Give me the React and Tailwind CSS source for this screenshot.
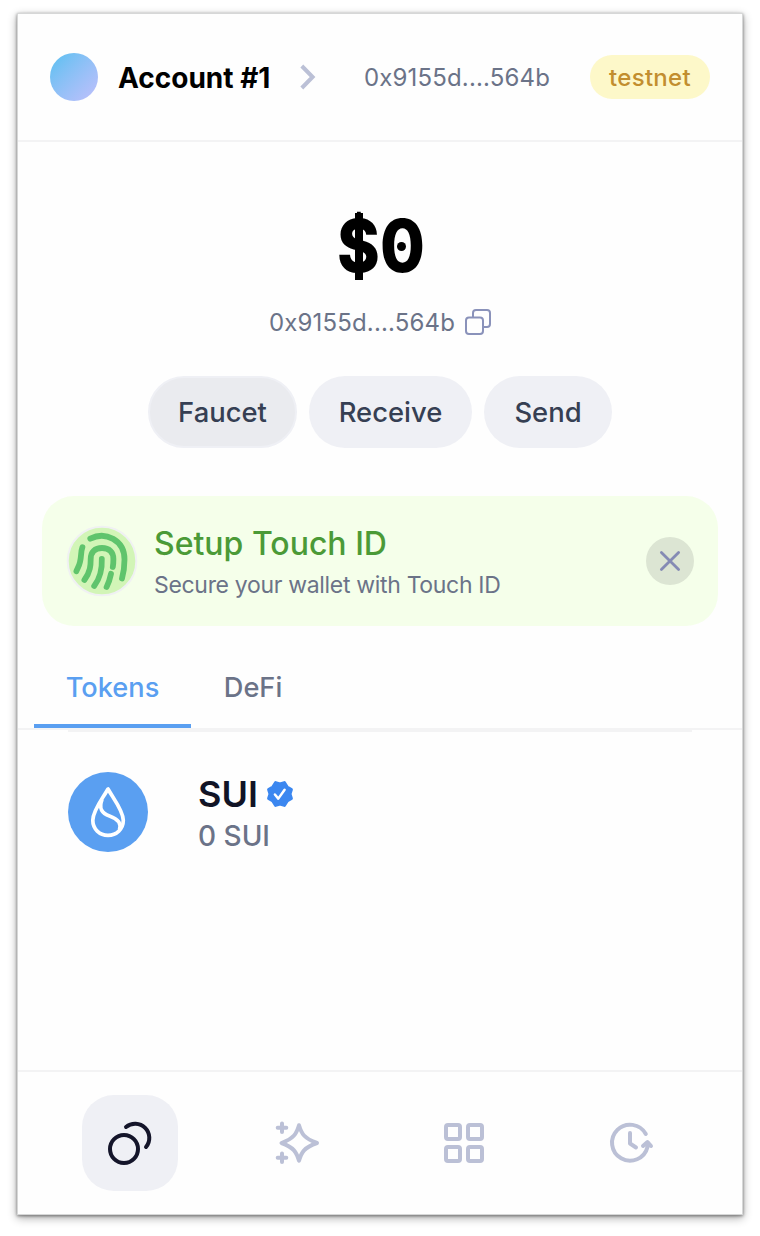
const ADDRESS = '0x9155d....564b';

function CopyIcon() {
  return (
    <svg className="mb-0.5 ml-[10px] size-[26px]" viewBox="0 0 26 26" fill="none" stroke="#8a92ba" strokeWidth="2" strokeLinejoin="round">
      <rect x="1" y="8.5" width="17" height="16.5" rx="3" />
      <path d="M8 8.5V4a3 3 0 0 1 3-3h11a3 3 0 0 1 3 3v11a3 3 0 0 1-3 3h-4" />
    </svg>
  );
}

function FingerprintIcon() {
  return (
    <svg className="size-[72px] shrink-0" viewBox="0 0 72 72" fill="none">
      <circle cx="36" cy="36" r="34.3" fill="#d2f5b7" stroke="#f0f1f3" strokeWidth="2" />
      <g stroke="#5fc46c" strokeWidth="5.8" strokeLinecap="round">
        <path d="M24.3 13.7C39.5 6 58.5 15 58.5 34.5C58.5 42 57.5 48 56 53.5" />
        <path d="M16.4 22.3C14.6 27 15.6 31 14 37C13.3 40.5 11.7 43 10.4 46.2" />
        <path d="M18.4 55C24.5 46.5 24.7 40 24.7 34C24.7 27 29 23 36 23C43 23 47.4 27 47.4 34C47.4 37.5 47.3 39.5 46.8 42" />
        <path d="M35.8 34C36.3 45 33.5 54 28.2 61" />
        <path d="M45 48.8C44 53.5 42.7 58 40.6 62" />
      </g>
    </svg>
  );
}

function SuiLogo() {
  return (
    <svg className="size-20 shrink-0" viewBox="0 0 80 80" fill="none">
      <circle cx="40" cy="40" r="40" fill="#5a9ff1" />
      <g stroke="#fff" strokeWidth="3.7" strokeLinejoin="round">
        <path d="M40 17C35 26 24.8 38.5 24.8 48.3C24.8 57 31.5 63.3 40 63.3C48.5 63.3 55.3 57 55.3 48.3C55.3 38.5 45 26 40 17Z" />
        <path d="M34 27.5C30.5 36.5 34 41.5 41.5 44C50 47 53.5 51.5 51.5 57.5" />
      </g>
    </svg>
  );
}

function VerifiedIcon() {
  return (
    <svg className="ml-[8px] size-7" viewBox="0 0 28 28">
      <path
        fill="#3b87f0" stroke="#3b87f0" strokeWidth="3" strokeLinejoin="round"
        d="M14 4L18.4 2.6L21.1 6.9L25.4 9.6L24 14L25.4 18.4L21.1 21.1L18.4 25.4L14 24L9.6 25.4L6.9 21.1L2.6 18.4L4 14L2.6 9.6L6.9 6.9L9.6 2.6Z"
      />
      <path d="M8.9 14.5L12.3 18.6L18.6 9.7" fill="none" stroke="#fff" strokeWidth="2.5" strokeLinecap="round" strokeLinejoin="round" />
    </svg>
  );
}

function NavButton({ active, children }) {
  return (
    <button className={active ? 'flex size-24 items-center justify-center rounded-[32px] bg-[#eff0f5] text-[#14152a]' : 'flex size-24 items-center justify-center text-[#bbc0d6]'}>
      <svg className="size-12" viewBox="0 0 48 48" fill="none" stroke="currentColor" strokeWidth="4" strokeLinecap="round" strokeLinejoin="round">
        {children}
      </svg>
    </button>
  );
}

export default function App() {
  return (
    <div className="flex h-[1236px] w-[760px] bg-white pt-[13px] pl-[17px] font-['Inter','Liberation_Sans',sans-serif]">
      <main className="flex h-[1202px] w-[726px] flex-col border border-[#d6d7d7] bg-[#fefefe] shadow-[0_3px_9px_rgba(0,0,0,0.32),0_1px_3px_rgba(0,0,0,0.45)]">
        <header className="flex h-32 shrink-0 items-center border-b-2 border-[#f3f3f4] pr-8 pl-8">
          <div className="size-12 shrink-0 rounded-full bg-linear-to-br from-[#54c0f1] to-[#bfbffc]" />
          <span className="ml-[20px] w-[153px] pt-0.5 text-[28px] font-bold whitespace-nowrap text-black">Account #1</span>
          <svg className="ml-[29px] h-[26px] w-4" viewBox="0 0 16 26" fill="none" stroke="#bbc0d6" strokeWidth="4">
            <path d="M1.8 2L12.6 13L1.8 24" />
          </svg>
          <span className="ml-[48px] w-[186px] pt-0.5 text-[24px] tracking-[0.15px] whitespace-nowrap text-[#6b7388]">{ADDRESS}</span>
          <span className="ml-auto flex h-11 w-[120px] items-center justify-center rounded-full bg-[#fdf8c9] pt-0.5 text-[24px] font-medium tracking-[0.3px] text-[#c28e2f]">testnet</span>
        </header>

        <section className="flex flex-col items-center">
          <h1 className="relative mt-[61px] h-[86px] w-[94px] pl-1 text-black">
            <span className="block origin-top-left scale-x-[0.89] text-[73px] leading-[86px] font-extrabold">$0</span>
            <span className="absolute top-[10px] left-[22px] h-[67px] w-2 bg-black" />
            <span className="absolute top-[39px] left-[64px] size-[9px] rounded-full bg-black" />
          </h1>
          <div className="mt-[16px] flex h-9 items-center text-[24px] text-[#6b7388]">
            <span className="w-[186px] tracking-[0.15px] whitespace-nowrap">{ADDRESS}</span>
            <CopyIcon />
          </div>
          <div className="mt-[35px] flex gap-3 text-[27.4px] font-medium text-[#363f53]">
            <button className="h-[72px] w-[149px] rounded-full border-2 border-[#eff0f5] bg-[#eaebef] pt-0.5">Faucet</button>
            <button className="h-[72px] w-[163px] rounded-full bg-[#eff0f5] pt-0.5">Receive</button>
            <button className="h-[72px] w-[128px] rounded-full bg-[#eff0f5] pt-0.5">Send</button>
          </div>
        </section>

        <section className="mx-6 mt-12 flex h-[130px] shrink-0 items-center rounded-[32px] bg-[#f5ffea] pr-6 pl-6">
          <FingerprintIcon />
          <div className="ml-4 flex flex-col pt-[3px]">
            <span className="text-[32px] leading-[42px] font-medium whitespace-nowrap text-[#4b9a37]">Setup Touch ID</span>
            <span className="mt-[2px] text-[23px] leading-[36px] tracking-[-0.32px] whitespace-nowrap text-[#6b7388]">Secure your wallet with Touch ID</span>
          </div>
          <button className="ml-auto flex size-12 items-center justify-center rounded-full bg-[#dce5d3]">
            <svg className="size-6" viewBox="0 0 24 24" stroke="#858bb4" strokeWidth="2.8" strokeLinecap="round">
              <path d="M3.4 3.4L20.6 20.6M20.6 3.4L3.4 20.6" />
            </svg>
          </button>
        </section>

        <nav className="mt-[22px] flex h-[82px] shrink-0 border-b-2 border-[#f3f3f4] pl-4 text-[27.2px] font-medium">
          <button className="h-20 w-[157px] border-b-4 border-[#5a9ff1] pt-1 text-[#5a9ff1]">Tokens</button>
          <button className="h-20 w-[124px] border-b-4 border-transparent pt-1 text-[#6b7388]">DeFi</button>
        </nav>

        <section className="mx-[50px] flex flex-1 items-start border-t-2 border-[#f3f3f4] pt-10">
          <SuiLogo />
          <div className="ml-[50px] flex flex-col">
            <div className="flex h-11 items-center">
              <span className="text-[36px] font-semibold text-[#111426]">SUI</span>
              <VerifiedIcon />
            </div>
            <span className="text-[28px] leading-10 font-medium text-[#6b7388]">0 SUI</span>
          </div>
        </section>

        <footer className="flex h-[144px] shrink-0 items-start justify-between border-t-2 border-[#f3f3f4] px-16 pt-[23px]">
          <NavButton active>
            <circle cx="18" cy="30" r="14" />
            <path d="M20 8A14.2 14.2 0 0 1 40 28" />
          </NavButton>
          <NavButton>
            <path d="M9 4.5V13M4.7 8.7H13.3M9 34.5V43M4.7 38.7H13.3" />
            <path d="M26 6.2C28.5 14.7 31 19.2 44 24C31 28.5 28.5 33.3 26 41.8C23.5 33.3 21 28.5 8.5 24C21 19.2 23.5 14.7 26 6.2Z" />
          </NavButton>
          <NavButton>
            <rect x="7" y="6" width="14" height="14" rx="2" />
            <rect x="29" y="6" width="14" height="14" rx="2" />
            <rect x="7" y="28" width="14" height="14" rx="2" />
            <rect x="29" y="28" width="14" height="14" rx="2" />
          </NavButton>
          <NavButton>
            <path d="M39.8 15A18 18 0 1 0 41.5 28M37 27L41.5 23L45 27" />
            <path d="M24 14V24.5L30 28.5" />
          </NavButton>
        </footer>
      </main>
    </div>
  );
}
